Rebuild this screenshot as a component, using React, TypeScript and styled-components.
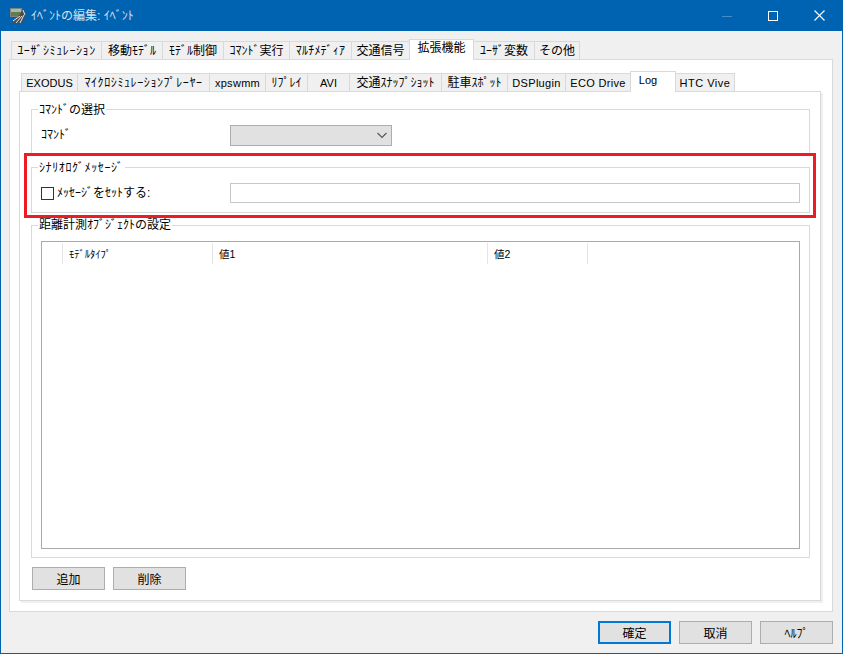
import React from "react";
import styled, { createGlobalStyle } from "styled-components";

const Global = createGlobalStyle`
  html, body { margin: 0; padding: 0; background: #f0f0f0; }
  body { font-family: "Liberation Sans", "Noto Sans CJK JP", sans-serif; font-size: 12px; color: #000; }
  * { box-sizing: border-box; }
`;

const Window = styled.div`
  width: 843px; height: 654px; display: flex; flex-direction: column;
  border: 1px solid #0063b1; border-top: none; background: #f0f0f0; position: relative; overflow: hidden;
`;
const TitleBar = styled.div`
  height: 31px; flex: none; background: #0063b1; display: flex; align-items: center; padding-left: 8px;
`;
const TitleText = styled.span`
  margin-left: 5px; padding-top: 2px; color: #d4e2f0; font-size: 12px; flex: 1; line-height: 29px; white-space: nowrap;
`;
const Controls = styled.div`display: flex; align-items: center;`;
const Control = styled.div`width: 46px; height: 31px; display: flex; align-items: center; justify-content: center;`;
const Client = styled.div`flex: 1; display: flex; flex-direction: column; padding: 8px 9px 0 8px; min-height: 0;`;
const Strip = styled.div<{ $inset: number }>`
  height: 21px; flex: none; display: flex; align-items: flex-end; padding-left: ${p => p.$inset}px; margin-bottom: -1px;
`;
const Tab = styled.div<{ $w: number; $active?: boolean; $spread: number; $right: number; $size: number }>`
  width: ${p => p.$w}px; height: ${p => (p.$active ? 21 : 19)}px; flex: none;
  margin-left: -1px; padding-right: ${p => p.$right}px;
  border: 1px solid #d9d9d9; border-bottom: ${p => (p.$active ? "none" : "1px solid #d9d9d9")};
  background: ${p => (p.$active ? "#fff" : "#f0f0f0")};
  position: relative; z-index: ${p => (p.$active ? 2 : 0)};
  display: flex; align-items: ${p => (p.$active ? "flex-start" : "center")}; justify-content: center;
  font-size: ${p => p.$size}px; line-height: 16px; letter-spacing: ${p => p.$spread}px; white-space: nowrap; overflow: hidden;
`;
const OuterPanel = styled.div`
  width: 824px; height: 553px; flex: none; border: 1px solid #d9d9d9; background: #fff; padding: 11px 0 0 9px; position: relative; z-index: 1;
`;
const InnerPanel = styled.div`
  width: 802px; height: 510px; border: 1px solid #d9d9d9; background: #fff; padding: 17px 0 0 11px;
  box-shadow: 2px 2px 0 #f0f0f0; display: flex; flex-direction: column; position: relative; z-index: 1;
`;
const Group = styled.div<{ $h: number }>`
  width: 779px; height: ${p => p.$h}px; flex: none; border: 1px solid #d9d9d9; padding: 15px 9px 0 9px; position: relative; margin-bottom: 12px;
`;
const Legend = styled.span<{ $spread?: number; $top: number }>`
  position: absolute; left: 6px; top: ${p => p.$top}px; background: #fff; padding: 0 1px; font-size: 12px; line-height: 16px; white-space: nowrap;
  letter-spacing: ${p => p.$spread ?? 0}px;
`;
const Row = styled.div`display: flex; align-items: center; height: 20px;`;
const RowLabel = styled.div`width: 189px; flex: none; font-size: 12px; line-height: 16px; display: flex; align-items: center; white-space: nowrap;`;
const Combo = styled.div`
  width: 162px; height: 21px; background: #e1e1e1; border: 1px solid #adadad; display: flex; align-items: center; justify-content: flex-end; padding-right: 3px;
`;
const Check = styled.span`
  width: 13px; height: 13px; border: 1px solid #333; background: #fff; margin-right: 3px; flex: none;
`;
const TextInput = styled.div`flex: 1; height: 20px; border: 1px solid #c8c8c8; background: #fff;`;
const ListBox = styled.div`height: 308px; border: 1px solid #a9a9b0; padding-top: 1px; background: #fff;`;
const HeaderRow = styled.div`display: flex; height: 21px;`;
const HeaderCell = styled.div<{ $w: number }>`
  width: ${p => p.$w}px; flex: none; border-right: 1px solid #e5e5e5; padding-left: 6px; padding-top: 2px; font-size: 10.5px; line-height: 19px; white-space: nowrap;
`;
const ButtonRow = styled.div`display: flex; gap: 8px; margin-top: -3px; margin-left: 1px;`;
const Button = styled.div<{ $primary?: boolean }>`
  width: 73px; height: 23px; background: #e1e1e1; border: ${p => (p.$primary ? "2px solid #0078d7" : "1px solid #adadad")};
  display: flex; align-items: center; justify-content: center; font-size: 12px; white-space: nowrap;
`;
const Footer = styled.div`display: flex; justify-content: flex-end; gap: 8px; margin-top: 9px;`;
const Highlight = styled.div`
  position: absolute; left: 23px; top: 153px; width: 792px; height: 65px; border: 3.4px solid #ed1c24; pointer-events: none; z-index: 5;
`;

type TabDef = { label: string; w: number; active?: boolean; spread?: number; right?: number; size?: number };

const outerTabs: TabDef[] = [
  { label: "ﾕｰｻﾞｼﾐｭﾚｰｼｮﾝ", w: 91, spread: 0.6 }, { label: "移動ﾓﾃﾞﾙ", w: 62 }, { label: "ﾓﾃﾞﾙ制御", w: 62 },
  { label: "ｺﾏﾝﾄﾞ実行", w: 67 }, { label: "ﾏﾙﾁﾒﾃﾞｨｱ", w: 63, spread: 0.2 },
  { label: "交通信号", w: 59 }, { label: "拡張機能", w: 65, active: true }, { label: "ﾕｰｻﾞ変数", w: 62 }, { label: "その他", w: 46 },
];
const innerTabs: TabDef[] = [
  { label: "EXODUS", w: 57, size: 11 }, { label: "ﾏｲｸﾛｼﾐｭﾚｰｼｮﾝﾌﾟﾚｰﾔｰ", w: 133, spread: 0.6 }, { label: "xpswmm", w: 57, size: 11, spread: 0.3 },
  { label: "ﾘﾌﾟﾚｲ", w: 43 }, { label: "AVI", w: 43, size: 11 },
  { label: "交通ｽﾅｯﾌﾟｼｮｯﾄ", w: 93 }, { label: "駐車ｽﾎﾟｯﾄ", w: 67 }, { label: "DSPlugin", w: 59, size: 11, spread: 0.3 },
  { label: "ECO Drive", w: 66, size: 11, spread: 0.3 }, { label: "Log", w: 46, active: true, right: 10, size: 11 }, { label: "HTC Vive", w: 60, size: 11, spread: 0.5 },
];

const AppIcon = () => (
  <svg width="17" height="17" viewBox="0 0 17 17">
    <rect x="1" y="1" width="12" height="9" fill="#7d8580" />
    <rect x="2" y="2" width="10" height="3" fill="#a9b8b0" />
    <rect x="2" y="5" width="10" height="4" fill="#5f7d4d" />
    <path d="M3 15 L11 7 L14 2 L16 4 L16 10 L13 16 L5 16 Z" fill="#4a4d50" />
    <path d="M4 14 L11 9 M7 16 L13 9 M11 16 L15 8 M14 3 L16 8" stroke="#e8e8e8" strokeWidth="1" fill="none" />
  </svg>
);

const TabRow = ({ tabs }: { tabs: TabDef[] }) => (
  <Strip $inset={3}>
    {tabs.map(t => (
      <Tab key={t.label} $w={t.w} $active={t.active} $spread={t.spread ?? 0} $right={t.right ?? 0} $size={t.size ?? 12}>
        {t.label}
      </Tab>
    ))}
  </Strip>
);

export default function App() {
  return (
    <>
      <Global />
      <Window>
        <TitleBar>
          <AppIcon />
          <TitleText>ｲﾍﾞﾝﾄの編集: ｲﾍﾞﾝﾄ</TitleText>
          <Controls>
            <Control>
              <svg width="10" height="10" viewBox="0 0 10 10"><path d="M0 5.5H10" stroke="#4a8bc9" strokeWidth="1" /></svg>
            </Control>
            <Control>
              <svg width="10" height="10" viewBox="0 0 10 10"><rect x=".5" y=".5" width="9" height="9" fill="none" stroke="#fff" /></svg>
            </Control>
            <Control>
              <svg width="11" height="11" viewBox="0 0 11 11"><path d="M.5 .5L10.5 10.5M10.5 .5L.5 10.5" stroke="#fff" strokeWidth="1.1" /></svg>
            </Control>
          </Controls>
        </TitleBar>
        <Client>
          <TabRow tabs={outerTabs} />
          <OuterPanel>
            <TabRow tabs={innerTabs} />
            <InnerPanel>
              <Group $h={46}>
                <Legend $top={-8}>ｺﾏﾝﾄﾞの選択</Legend>
                <Row>
                  <RowLabel>ｺﾏﾝﾄﾞ</RowLabel>
                  <Combo>
                    <svg width="12" height="12" viewBox="0 0 12 12"><path d="M1.5 4L6 8.5L10.5 4" fill="none" stroke="#555" strokeWidth="1.1" /></svg>
                  </Combo>
                </Row>
              </Group>
              <Group $h={46}>
                <Legend $top={-8} $spread={0.6}>ｼﾅﾘｵﾛｸﾞﾒｯｾｰｼﾞ</Legend>
                <Row>
                  <RowLabel><Check />ﾒｯｾｰｼﾞをｾｯﾄする:</RowLabel>
                  <TextInput />
                </Row>
              </Group>
              <Group $h={333}>
                <Legend $top={-9}>距離計測ｵﾌﾞｼﾞｪｸﾄの設定</Legend>
                <ListBox>
                  <HeaderRow>
                    <HeaderCell $w={21} />
                    <HeaderCell $w={150}>ﾓﾃﾞﾙﾀｲﾌﾟ</HeaderCell>
                    <HeaderCell $w={275}>値1</HeaderCell>
                    <HeaderCell $w={100}>値2</HeaderCell>
                  </HeaderRow>
                </ListBox>
              </Group>
              <ButtonRow>
                <Button>追加</Button>
                <Button>削除</Button>
              </ButtonRow>
            </InnerPanel>
          </OuterPanel>
          <Footer>
            <Button $primary>確定</Button>
            <Button>取消</Button>
            <Button>ﾍﾙﾌﾟ</Button>
          </Footer>
        </Client>
        <Highlight />
      </Window>
    </>
  );
}
